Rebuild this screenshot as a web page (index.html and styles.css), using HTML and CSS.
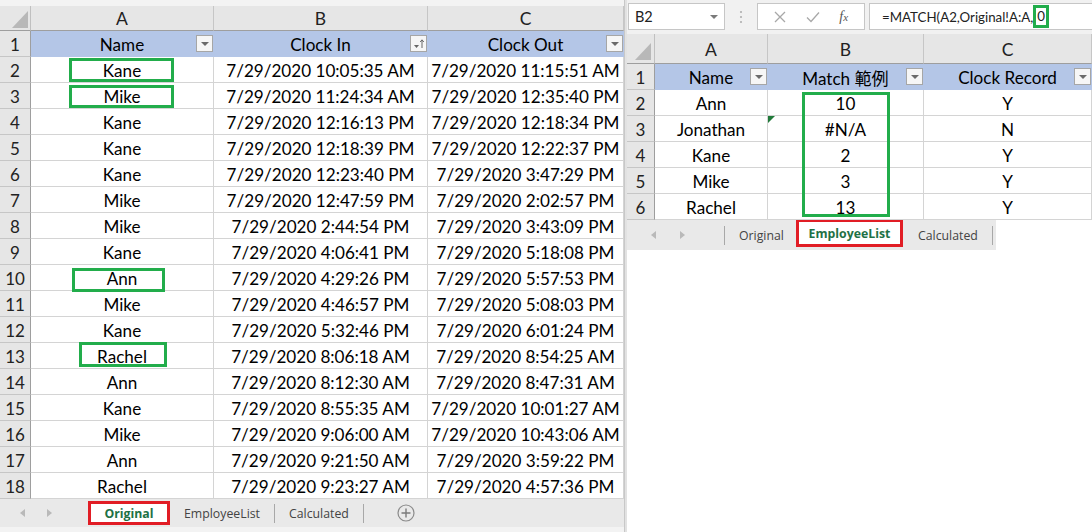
FILE: index.html
```html
<!DOCTYPE html>
<html>
<head>
<meta charset="utf-8">
<link rel="stylesheet" href="styles.css">
</head>
<body>
<div class="app">
  <section class="pane left">
    <div class="topstrip"></div>
    <div class="grid gridL">
      <div class="c corner"><svg class="tri" width="31" height="25" viewBox="0 0 31 25"><polygon points="12,22 28,22 28,5" fill="#b8b8b8"/></svg></div>
      <div class="c ch">A</div><div class="c ch">B</div><div class="c ch">C</div>

      <div class="c rh">1</div>
      <div class="c th">Name<span class="fb"><i class="dd"></i></span></div>
      <div class="c th">Clock In<span class="fb"><svg width="15" height="15" viewBox="0 0 15 15"><polygon points="3,9 8,9 5.5,12" fill="#666"/><path d="M11 12V4M9.2 6L11 3.8 12.8 6" stroke="#666" stroke-width="1" fill="none"/></svg></span></div>
      <div class="c th">Clock Out<span class="fb"><i class="dd"></i></span></div>

      <div class="c rh">2</div><div class="c">Kane<span class="gbox g2"></span></div><div class="c">7/29/2020 10:05:35 AM</div><div class="c">7/29/2020 11:15:51 AM</div>
      <div class="c rh">3</div><div class="c">Mike<span class="gbox g3"></span></div><div class="c">7/29/2020 11:24:34 AM</div><div class="c">7/29/2020 12:35:40 PM</div>
      <div class="c rh">4</div><div class="c">Kane</div><div class="c">7/29/2020 12:16:13 PM</div><div class="c">7/29/2020 12:18:34 PM</div>
      <div class="c rh">5</div><div class="c">Kane</div><div class="c">7/29/2020 12:18:39 PM</div><div class="c">7/29/2020 12:22:37 PM</div>
      <div class="c rh">6</div><div class="c">Kane</div><div class="c">7/29/2020 12:23:40 PM</div><div class="c">7/29/2020 3:47:29 PM</div>
      <div class="c rh">7</div><div class="c">Mike</div><div class="c">7/29/2020 12:47:59 PM</div><div class="c">7/29/2020 2:02:57 PM</div>
      <div class="c rh">8</div><div class="c">Mike</div><div class="c">7/29/2020 2:44:54 PM</div><div class="c">7/29/2020 3:43:09 PM</div>
      <div class="c rh">9</div><div class="c">Kane</div><div class="c">7/29/2020 4:06:41 PM</div><div class="c">7/29/2020 5:18:08 PM</div>
      <div class="c rh">10</div><div class="c">Ann<span class="gbox g10"></span></div><div class="c">7/29/2020 4:29:26 PM</div><div class="c">7/29/2020 5:57:53 PM</div>
      <div class="c rh">11</div><div class="c">Mike</div><div class="c">7/29/2020 4:46:57 PM</div><div class="c">7/29/2020 5:08:03 PM</div>
      <div class="c rh">12</div><div class="c">Kane</div><div class="c">7/29/2020 5:32:46 PM</div><div class="c">7/29/2020 6:01:24 PM</div>
      <div class="c rh">13</div><div class="c">Rachel<span class="gbox g13"></span></div><div class="c">7/29/2020 8:06:18 AM</div><div class="c">7/29/2020 8:54:25 AM</div>
      <div class="c rh">14</div><div class="c">Ann</div><div class="c">7/29/2020 8:12:30 AM</div><div class="c">7/29/2020 8:47:31 AM</div>
      <div class="c rh">15</div><div class="c">Kane</div><div class="c">7/29/2020 8:55:35 AM</div><div class="c">7/29/2020 10:01:27 AM</div>
      <div class="c rh">16</div><div class="c">Mike</div><div class="c">7/29/2020 9:06:00 AM</div><div class="c">7/29/2020 10:43:06 AM</div>
      <div class="c rh">17</div><div class="c">Ann</div><div class="c">7/29/2020 9:21:50 AM</div><div class="c">7/29/2020 3:59:22 PM</div>
      <div class="c rh">18</div><div class="c">Rachel</div><div class="c">7/29/2020 9:23:27 AM</div><div class="c">7/29/2020 4:57:36 PM</div>
    </div>
    <div class="tabs tabsL">
      <div class="nav navL"><i class="al"></i><i class="ar"></i></div>
      <div class="tab active actL">Original</div>
      <div class="tab">EmployeeList</div>
      <div class="sep"></div>
      <div class="tab">Calculated</div>
      <div class="sep"></div>
      <div class="plus"><svg width="18" height="18" viewBox="0 0 18 18"><circle cx="9" cy="9" r="8" fill="none" stroke="#8a8a8a" stroke-width="1.2"/><path d="M9 4.5v9M4.5 9h9" stroke="#7a7a7a" stroke-width="1.4"/></svg></div>
    </div>
  </section>

  <div class="divider"></div>

  <section class="pane right">
    <div class="fbar">
      <div class="namebox"><span>B2</span><i class="dd ddn"></i></div>
      <div class="dots"><svg width="4" height="14" viewBox="0 0 4 14"><circle cx="2" cy="2" r="1.1" fill="#b0b0b0"/><circle cx="2" cy="7" r="1.1" fill="#b0b0b0"/><circle cx="2" cy="12" r="1.1" fill="#b0b0b0"/></svg></div>
      <div class="btns">
        <svg width="12" height="12" viewBox="0 0 12 12"><path d="M1 1L11 11M11 1L1 11" stroke="#a8a8a8" stroke-width="1.3"/></svg>
        <svg width="14" height="12" viewBox="0 0 14 12"><path d="M1 6.5L5 10.5 13 1.5" stroke="#a8a8a8" stroke-width="1.3" fill="none"/></svg>
        <span class="fx">f<small>x</small></span>
      </div>
      <div class="finput">=MATCH(A2,Original!A:A,<span class="hl">0</span></div>
    </div>
    <div class="grid gridR">
      <div class="c corner"><svg class="tri" width="28" height="30" viewBox="0 0 28 30"><polygon points="8,26 24,26 24,9" fill="#b8b8b8"/></svg></div>
      <div class="c ch">A</div><div class="c ch">B</div><div class="c ch">C</div>

      <div class="c rh">1</div>
      <div class="c th">Name<span class="fb"><i class="dd"></i></span></div>
      <div class="c th">Match 範例<span class="fb"><i class="dd"></i></span></div>
      <div class="c th">Clock Record<span class="fb"><i class="dd"></i></span></div>

      <div class="c rh">2</div><div class="c">Ann</div><div class="c">10<span class="gbox gR"></span></div><div class="c">Y</div>
      <div class="c rh">3</div><div class="c">Jonathan</div><div class="c">#N/A<span class="err"></span></div><div class="c">N</div>
      <div class="c rh">4</div><div class="c">Kane</div><div class="c">2</div><div class="c">Y</div>
      <div class="c rh">5</div><div class="c">Mike</div><div class="c">3</div><div class="c">Y</div>
      <div class="c rh">6</div><div class="c">Rachel</div><div class="c">13</div><div class="c">Y</div>
    </div>
    <div class="tabs tabsR">
      <div class="nav navR"><i class="al"></i><i class="ar"></i></div>
      <div class="sep"></div>
      <div class="tab tabO">Original</div>
      <div class="tab active actR">EmployeeList</div>
      <div class="tab tabC">Calculated</div>
      <div class="sep"></div>
    </div>
  </section>
</div>
</body>
</html>
```

FILE: styles.css
```css
* { box-sizing: border-box; }
html, body { margin: 0; padding: 0; }
body {
  width: 1092px;
  height: 532px;
  overflow: hidden;
  background: #ffffff;
  font-family: Lato, "Noto Sans CJK TC", sans-serif;
}
.app { display: flex; height: 532px; }
.pane { display: flex; flex-direction: column; }
.left { width: 624px; background: #f3f3f3; }
.divider { width: 3px; background: #e2e2e2; border-left: 1px solid #c8c8c8; }
.right { width: 465px; background: #ffffff; }

.topstrip { height: 6px; background: #f3f3f3; }

.grid { display: grid; background: #ffffff; }
.gridL { grid-template-columns: 31px 183px 214px 196px; grid-template-rows: 25px; grid-auto-rows: 26px; }
.gridR { grid-template-columns: 28px 113px 156px 168px; grid-template-rows: 30px; grid-auto-rows: 26px; }

.c {
  position: relative;
  display: flex;
  align-items: center;
  justify-content: center;
  padding-top: 1px;
  border-right: 1px solid #d4d4d4;
  border-bottom: 1px solid #d4d4d4;
  font-size: 17.1px;
  color: #000;
  white-space: nowrap;
}
.corner { background: #e6e6e6; border-right-color: #c0c0c0; border-bottom-color: #9e9e9e; padding-top: 0; }
.tri { position: absolute; left: 0; top: 0; }
.ch { background: #e6e6e6; border-right-color: #c6c6c6; border-bottom-color: #9e9e9e; color: #222; font-size: 17.5px; }
.rh { background: #e6e6e6; border-right-color: #9e9e9e; border-bottom-color: #c6c6c6; color: #222; font-size: 17px; }
.th { background: #b4c6e7; border-right-color: #b4c6e7; border-bottom-color: #b4c6e7; }

.fb {
  position: absolute;
  right: 0;
  top: 4px;
  width: 17px;
  height: 17px;
  border: 1px solid #a6a6a6;
  background: #f6f6f6;
  display: flex;
  align-items: center;
  justify-content: center;
}
.dd {
  display: block;
  width: 0;
  height: 0;
  border-left: 4px solid transparent;
  border-right: 4px solid transparent;
  border-top: 4px solid #6b6b6b;
  margin-top: 1px;
}

.gbox {
  position: absolute;
  border: 3px solid #22ad4b;
  z-index: 2;
  pointer-events: none;
}
.g2 { left: 38px; top: 1px; width: 105px; height: 24px; }
.g3 { left: 38px; top: 2px; width: 105px; height: 23px; }
.g10 { left: 41px; top: 3px; width: 93px; height: 24px; }
.g13 { left: 48px; top: -1px; width: 88px; height: 25px; }
.gR { left: 34px; top: 2px; width: 88px; height: 125px; }

.err {
  position: absolute;
  left: 0;
  top: 0;
  width: 0;
  height: 0;
  border-top: 7px solid #217a3a;
  border-right: 7px solid transparent;
}

/* tabs */
.tabs { display: flex; align-items: center; background: #e9e9e9; font-family: "Open Sans", sans-serif; font-size: 12.3px; color: #444; }
.tabsL { height: 28px; }
.tabsR { height: 30px; width: 369px; }
.nav { display: flex; align-items: center; height: 100%; }
.navL { width: 88px; padding-left: 20px; gap: 22px; }
.navR { width: 97px; padding-left: 24px; gap: 24px; }
.al, .ar { display: block; width: 0; height: 0; border-top: 4px solid transparent; border-bottom: 4px solid transparent; }
.al { border-right: 5px solid #b9b9b9; }
.ar { border-left: 5px solid #b9b9b9; }
.tab { padding: 0 14px; white-space: nowrap; }
.sep { width: 1px; height: 19px; background: #a8a8a8; }
.active {
  background: #ffffff;
  border: 3px solid #e11d25;
  color: #1e7145;
  font-weight: 700;
  display: flex;
  align-items: center;
  justify-content: center;
  padding: 0;
}
.actL { width: 82px; height: 24px; }
.actR { width: 107px; height: 28px; align-self: flex-start; margin-top: -1px; }
.tabO { padding: 0 12px 0 14px; }
.tabC { padding: 0 14px 0 15px; }
.plus { margin-left: 33px; display: flex; align-items: center; }

/* formula bar */
.fbar { height: 34px; background: #f1f1f1; display: flex; align-items: flex-start; padding-top: 3px; font-size: 13px; color: #222; }
.namebox {
  margin-left: 1px;
  width: 97px;
  height: 27px;
  background: #fff;
  border: 1px solid #c6c6c6;
  display: flex;
  align-items: center;
  justify-content: space-between;
  padding: 0 6px 0 6px;
  font-size: 14.5px;
}
.ddn { border-top-color: #7a7a7a; }
.dots { width: 32px; height: 27px; display: flex; align-items: center; justify-content: center; }
.btns {
  width: 108px;
  height: 27px;
  background: #fff;
  border: 1px solid #c6c6c6;
  display: flex;
  align-items: center;
  justify-content: space-around;
  padding: 0 6px;
}
.fx { font-family: "Liberation Serif", serif; font-style: italic; font-size: 14px; color: #555; }
.fx small { font-size: 11px; }
.finput {
  margin-left: 4px;
  flex: 1;
  height: 27px;
  background: #fff;
  border: 1px solid #c6c6c6;
  border-right: none;
  display: flex;
  align-items: center;
  padding-left: 12px;
  font-size: 13.3px;
  white-space: nowrap;
}
.hl { display: inline-block; border: 3px solid #22ad4b; padding: 0 1px; line-height: 17px; }
```
